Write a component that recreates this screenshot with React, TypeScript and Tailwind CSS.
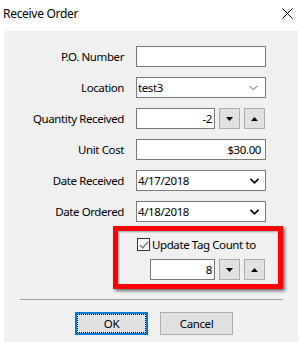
import React from "react";

const font = { fontFamily: '"Noto Sans", "Open Sans", sans-serif' };

function Chevron({ dark }: { dark?: boolean }) {
  return (
    <svg width="9" height="6" viewBox="0 0 9 6" className="shrink-0">
      <path
        d="M0.5 0.8 L4.5 4.8 L8.5 0.8"
        fill="none"
        stroke={dark ? "#000" : "#606060"}
        strokeWidth={dark ? 1.6 : 1}
      />
    </svg>
  );
}

function SpinBtn({ up }: { up?: boolean }) {
  return (
    <div className="w-[21px] h-[21px] bg-[#e1e1e1] border border-[#adadad] flex items-center justify-center">
      <svg width="7" height="4" viewBox="0 0 7 4">
        {up ? <path d="M0 4 L3.5 0 L7 4 Z" fill="#000" /> : <path d="M0 0 L3.5 4 L7 0 Z" fill="#000" />}
      </svg>
    </div>
  );
}

function Row({ label, children }: { label: string; children: React.ReactNode }) {
  return (
    <div className="flex items-center h-[21px]">
      <div className="w-[120px] text-right text-[11.5px] tracking-[-0.4px] text-black leading-none">{label}</div>
      <div className="ml-[12px]">{children}</div>
    </div>
  );
}

const txt = "text-[11.5px] tracking-[-0.4px]";

export default function App() {
  return (
    <div className="w-[302px] h-[345px] bg-white relative text-black" style={font}>
      <div className="h-[31px] flex items-center justify-between pl-[3px] pr-[9px]">
        <span className="text-[12px] tracking-[-0.3px] leading-none -mt-[3px]">Receive Order</span>
        <svg width="11" height="11" viewBox="0 0 11 11" className="-mt-[4px]">
          <path d="M0.5 0.5 L10.5 10.5 M10.5 0.5 L0.5 10.5" stroke="#000" strokeWidth="1" />
        </svg>
      </div>
      <div className="mx-[4px] w-[294px] h-[311px] bg-[#f0f0f0] pt-[15px] flex flex-col">
        <div className="flex flex-col gap-[10px]">
          <Row label="P.O. Number">
            <div className="w-[130px] h-[21px] bg-white border border-[#7a7a7a]" />
          </Row>
          <Row label="Location">
            <div className={`w-[130px] h-[21px] bg-white border border-[#7a7a7a] flex items-center justify-between pl-[1px] pr-[7px] ${txt}`}>
              <span>test3</span>
              <Chevron />
            </div>
          </Row>
          <Row label="Quantity Received">
            <div className="flex gap-[4px]">
              <div className={`w-[79px] h-[21px] bg-white border border-[#7a7a7a] flex items-center justify-end pr-[2px] ${txt}`}>
                -2
              </div>
              <SpinBtn />
              <SpinBtn up />
            </div>
          </Row>
          <Row label="Unit Cost">
            <div className={`w-[130px] h-[21px] bg-white border border-[#7a7a7a] flex items-center justify-end pr-[4px] ${txt}`}>
              $30.00
            </div>
          </Row>
          <Row label="Date Received">
            <div className={`w-[130px] h-[21px] bg-white border border-[#7a7a7a] flex items-center justify-between pl-[1px] pr-[6px] ${txt}`}>
              <span>4/17/2018</span>
              <Chevron dark />
            </div>
          </Row>
          <Row label="Date Ordered">
            <div className={`w-[130px] h-[21px] bg-white border border-[#7a7a7a] flex items-center justify-between pl-[1px] pr-[6px] ${txt}`}>
              <span>4/18/2018</span>
              <Chevron dark />
            </div>
          </Row>
        </div>
        <div className="ml-[109px] mt-[4px] w-[170px] h-[63px] border-[5px] border-[#ff0000] shadow-[2px_2px_3px_rgba(0,0,0,0.55),inset_1px_1px_2px_rgba(0,0,0,0.35)] flex flex-col">
          <div className="flex items-center ml-[19px] mt-[7px] h-[13px]">
            <div className="w-[13px] h-[13px] bg-white border border-[#333] flex items-center justify-center">
              <svg width="10" height="8" viewBox="0 0 10 8">
                <path d="M1 4 L3.8 6.8 L9 1" fill="none" stroke="#7a7a7a" strokeWidth="1.4" />
              </svg>
            </div>
            <span className={`ml-[2px] leading-none ${txt}`}>Update Tag Count to</span>
          </div>
          <div className="flex gap-[4px] ml-[32px] mt-[8px]">
            <div className={`w-[65px] h-[21px] bg-white border border-[#7a7a7a] flex items-center justify-end pr-[2px] ${txt}`}>
              8
            </div>
            <SpinBtn />
            <SpinBtn up />
          </div>
        </div>
        <div className="ml-[16px] mt-[10px] w-[263px] h-px bg-[#a0a0a0]" />
        <div className="flex mt-[12px] ml-[71px] gap-[12px]">
          <div className="w-[73px] h-[23px] bg-[#e1e1e1] border-2 border-[#0078d7]">
            <div className={`w-full h-full border border-dotted border-black flex items-center justify-center ${txt}`}>
              OK
            </div>
          </div>
          <div className={`w-[73px] h-[23px] bg-[#e1e1e1] border border-[#adadad] flex items-center justify-center ${txt}`}>
            Cancel
          </div>
        </div>
      </div>
    </div>
  );
}
